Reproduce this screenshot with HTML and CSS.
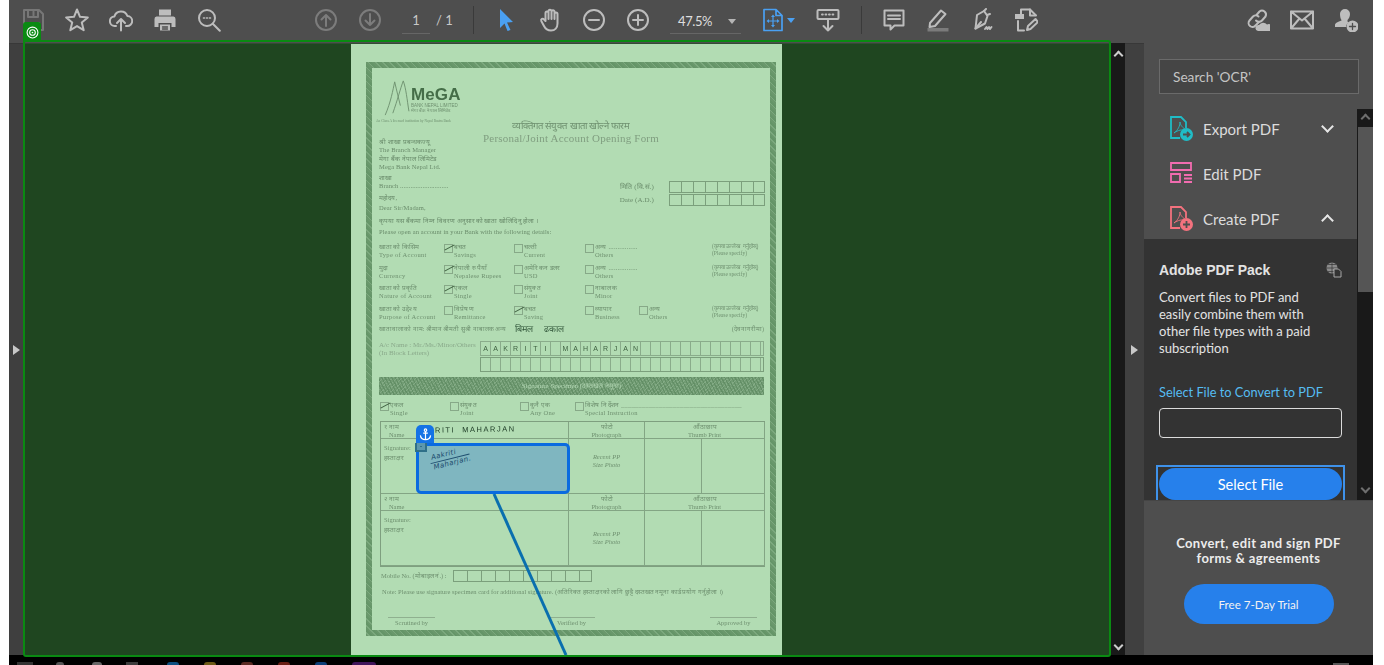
FILE: index.html
```html
<!DOCTYPE html>
<html lang="en">
<head>
<meta charset="utf-8">
<title>Acrobat Reader</title>
<link rel="stylesheet" href="styles.css">
</head>
<body>
<div class="app">
  <header class="toolbar">
    <div class="tb-group g-file">
      <button class="tb dim"><svg viewBox="0 0 24 24"><path d="M3 2h15l4 4v16H3z M7 2v7h10V2 M12.500 3.500v4"/><path d="M7 22v-7h11v7"/></svg></button>
      <button class="tb"><svg viewBox="0 0 24 24"><path d="M12 1.500l3 7.300 7.800.6-6 5.100 1.900 7.700-6.700-4.100-6.700 4.100 1.900-7.700-6-5.100 7.800-.6z"/></svg></button>
      <button class="tb"><svg viewBox="0 0 24 24"><path d="M7 18H6a4.800 4.800 0 0 1-.6-9.600 6.800 6.800 0 0 1 13-.4A5 5 0 0 1 18 18h-1"/><path d="M12 22.500V11.500M8 15l4-4 4 4"/></svg></button>
      <button class="tb"><svg viewBox="0 0 24 24"><path class="fill" d="M6 1.500h12v6H6zM3.500 8.500h17a2.500 2.500 0 0 1 2 2.500v8h-4v-4H5.500v4h-4v-8a2.500 2.500 0 0 1 2-2.500z"/><path class="fill" d="M7 16.500h10v6H7z"/><path class="cut" d="M9.500 19h5M9.500 21h5"/></svg></button>
      <button class="tb"><svg viewBox="0 0 24 24"><circle cx="10" cy="10" r="8"/><path d="M15.800 15.800l7 7"/><path class="dots" d="M6.500 10h1M9.500 10h1M12.500 10h1"/></svg></button>
    </div>
    <div class="tb-group g-page">
      <button class="tb off"><svg viewBox="0 0 24 24"><circle cx="12" cy="12" r="10"/><path d="M12 18V7M7.500 11.500L12 7l4.500 4.500"/></svg></button>
      <button class="tb off"><svg viewBox="0 0 24 24"><circle cx="12" cy="12" r="10"/><path d="M12 6v11M7.500 12.500L12 17l4.500-4.500"/></svg></button>
      <div class="pager"><span class="page-now">1</span><span class="page-all">/ 1</span></div>
    </div>
    <i class="tb-sep s1"></i>
    <div class="tb-group g-view">
      <button class="tb"><svg viewBox="0 0 24 24"><path class="blue-fill" d="M6 1l13 13-6 .5 3.500 7.500-3 1-3-7.500L6 20z"/></svg></button>
      <button class="tb hand-ic"><svg viewBox="0 0 24 24"><path d="M6.500 13V5a1.500 1.500 0 0 1 3 0v6V3.200a1.500 1.500 0 0 1 3 0V11 3.800a1.500 1.500 0 0 1 3 0V11 6a1.500 1.500 0 0 1 3 0v9.500c0 4-2.500 7-6.500 7s-5.500-1.500-7-4.500l-2.700-5c-.8-2 1.500-3 2.700-1.500z"/></svg></button>
      <button class="tb"><svg viewBox="0 0 24 24"><circle cx="12" cy="12" r="10"/><path d="M7 12h10"/></svg></button>
      <button class="tb"><svg viewBox="0 0 24 24"><circle cx="12" cy="12" r="10"/><path d="M7 12h10M12 7v10"/></svg></button>
      <div class="zoombox"><span>47.5%</span><i class="caret"></i></div>
      <button class="tb fit"><svg viewBox="0 0 24 24"><path class="blue" d="M3 1.500h12l6 6V22.500H3zM15 1.500v6h6"/><path class="blue thin" d="M12 9v8M8 13h8"/><path class="blue-fill" d="M12 6.500l2 2.500h-4zM12 19.500l2-2.500h-4zM5.500 13l2.500-2v4zM18.500 13l-2.500-2v4z"/></svg><i class="caret blue-caret"></i></button>
      <button class="tb keys"><svg viewBox="0 0 24 24"><rect x="1.500" y="2" width="21" height="9" rx="1"/><path d="M6 6.500h.8M9.500 6.500h.8M13 6.500h.8M16.500 6.500h.8M12 11v11.500M7.500 18l4.500 4.500 4.500-4.500"/></svg></button>
    </div>
    <i class="tb-sep s2"></i>
    <div class="tb-group g-tools">
      <button class="tb"><svg viewBox="0 0 24 24"><path d="M2.500 2.500h19v15h-9l-4 4v-4h-6z"/><path d="M6 7.500h12M6 11h12"/></svg></button>
      <button class="tb"><svg viewBox="0 0 24 24"><path d="M4 15L15 2.500l4.500 3.500L9 18l-5.500 1z"/><path class="fill soft" d="M1.500 20h21v3.500h-21z"/></svg></button>
      <button class="tb"><svg viewBox="0 0 24 24"><path d="M7 7l7-4 3.500 5-2.500 7.500-9.500 5z"/><path d="M5.500 20.500l5.500-6.500M14 3l2-2M17 7l3-1"/><path d="M15 21l1.500-2 1 2 1.500-2 1 2 1.500-2"/></svg></button>
      <button class="tb"><svg viewBox="0 0 24 24"><path d="M7 6.500V1.500h9l5.500 5.500"/><path d="M16 1.500v6h6"/><path class="fill" d="M1 6h9v5H1z"/><path d="M4 13v9.500h6"/><path d="M13 22l1-4 7.500-7 2.500 3-7.500 7z"/></svg></button>
    </div>
    <div class="tb-group g-share">
      <button class="tb"><svg viewBox="0 0 24 24"><path d="M10.500 7l3-3.500a4 4 0 0 1 6 5l-3.500 4a4 4 0 0 1-6 0"/><path d="M13 14l-3.500 3.500a3.800 3.800 0 0 1-6-5l3.500-4a4 4 0 0 1 5.500 0"/><path class="fill" d="M12 23a3 3 0 0 1 1-6 5 5 0 0 1 8-.5 3.300 3.300 0 0 1 3 6.500z"/></svg></button>
      <button class="tb"><svg viewBox="0 0 24 24"><path d="M1 3.500h22v17H1zM1 3.500l11 9 11-9M1 20.500l8.500-10M23 20.500l-8.500-10"/></svg></button>
      <button class="tb"><svg viewBox="0 0 24 24"><path class="fill" d="M11 1a5 5 0 0 1 5 5c0 3-1.500 5-2.500 6v1.500l1 1a7 7 0 0 0-2.500 4.500H1v-2c0-2 3-3 6.500-4.500V12C6.500 11 6 8.500 6 6a5 5 0 0 1 5-5z"/><circle class="fill" cx="18.500" cy="18.500" r="6"/><path class="cut" d="M15.500 18.500h6M18.500 15.500v6"/></svg></button>
    </div>
  </header>

  <main class="workspace">
    <div class="rail"><i class="tri"></i></div>
    <section class="doc">
      <article class="page">
        <div class="form">
          <div class="form-head">
            <div class="logo">
              <svg class="peaks" viewBox="0 0 30 40"><path d="M1 38C7 24 9 12 11 3 13 12 15 20 17 28 M9 36C14 22 17 10 20 2c3 8 4 20 6 32"/></svg>
              <div class="logo-text"><b>MeGA</b><span>BANK NEPAL LIMITED</span><span>मेगा बैंक नेपाल लिमिटेड</span></div>
              <small>An Class A licensed institution by Nepal Rastra Bank</small>
            </div>
            <div class="title"><span>व्यक्तिगत संयुक्त खाता खोल्ने फारम</span><strong>Personal/Joint Account Opening Form</strong></div>
          </div>
          <div class="addr">
            <p>श्री शाखा प्रबन्धकज्यू<br>The Branch Manager</p>
            <p>मेगा बैंक नेपाल लिमिटेड<br>Mega Bank Nepal Ltd.</p>
            <div class="addr-row">
              <p>शाखा<br>Branch ............................</p>
              <div class="dates">
                <div class="date-row"><span>मिति (वि.सं.)</span><i class="cells c8"></i></div>
                <div class="date-row"><span>Date (A.D.)</span><i class="cells c8"></i></div>
              </div>
            </div>
            <p class="dear">महोदय,<br>Dear Sir/Madam,</p>
            <p class="please">कृपया यस बैंकमा निम्न विवरण अनुसारको खाता खोलिदिनु होला ।<br>Please open an account in your Bank with the following details:</p>
          </div>

          <div class="opts">
            <div class="opt-row">
              <span class="lab">खाताको किसिम<br>Type of Account</span>
              <span class="opt on">बचत<br>Savings</span><span class="opt">चल्ती<br>Current</span><span class="opt">अन्य ................<br>Others</span>
              <span class="spec">(कृपया उल्लेख गर्नुहोस्)<br>(Please specify)</span>
            </div>
            <div class="opt-row">
              <span class="lab">मुद्रा<br>Currency</span>
              <span class="opt on">नेपाली रुपैयाँ<br>Nepalese Rupees</span><span class="opt">अमेरिकन डलर<br>USD</span><span class="opt">अन्य ................<br>Others</span>
              <span class="spec">(कृपया उल्लेख गर्नुहोस्)<br>(Please specify)</span>
            </div>
            <div class="opt-row">
              <span class="lab">खाताको प्रकृति<br>Nature of Account</span>
              <span class="opt on">एकल<br>Single</span><span class="opt">संयुक्त<br>Joint</span><span class="opt">नाबालक<br>Minor</span>
              <span class="spec"></span>
            </div>
            <div class="opt-row">
              <span class="lab">खाताको उद्देश्य<br>Purpose of Account</span>
              <span class="opt">विप्रेषण<br>Remittance</span><span class="opt on">बचत<br>Saving</span><span class="opt opt-split"><span class="opt">व्यापार<br>Business</span><span class="opt">अन्य<br>Others</span></span>
              <span class="spec">(कृपया उल्लेख गर्नुहोस्)<br>(Please specify)</span>
            </div>
          </div>

          <div class="acname-dev"><span>खातावालाको नाम: श्रीमान श्रीमती सुश्री नाबालक अन्य</span><em>बिमल</em><em>ढकाल</em><span class="end">(देवनागरीमा)</span></div>
          <div class="acname">
            <span class="ac-lab">A/c Name : Mr./Ms./Minor/Others<br>(In Block Letters)</span>
            <div class="ac-cells">
              <div class="letters"><i>A</i><i>A</i><i>K</i><i>R</i><i>I</i><i>T</i><i>I</i><i></i><i>M</i><i>A</i><i>H</i><i>A</i><i>R</i><i>J</i><i>A</i><i>N</i><i></i><i></i><i></i><i></i><i></i><i></i><i></i><i></i><i></i><i></i><i></i><i></i></div>
              <div class="cells c28"></div>
            </div>
          </div>

          <div class="sig-bar">Signature Specimen (दस्तखत नमूना)</div>

          <div class="sig-opts">
            <span class="opt on">एकल<br>Single</span><span class="opt">संयुक्त<br>Joint</span><span class="opt">कुनै एक<br>Any One</span><span class="opt wide">विशेष निर्देशन ___________________________________<br>Special Instruction</span>
          </div>

          <div class="sig-table">
            <div class="cell name">१ नाम<br>&nbsp;&nbsp;&nbsp;Name<b class="hand">RITI &nbsp;MAHARJAN</b></div>
            <div class="cell ctr">फोटो<br>Photograph</div>
            <div class="cell ctr thumbhead">औंठाछाप<br>Thumb Print</div>
            <div class="cell sign">Signature:<br>हस्ताक्षर</div>
            <div class="cell ctr photo raised"><em>Recent PP<br>Size Photo</em></div>
            <div class="cell"></div><div class="cell"></div>
            <div class="cell name">२ नाम<br>&nbsp;&nbsp;&nbsp;Name</div>
            <div class="cell ctr">फोटो<br>Photograph</div>
            <div class="cell ctr thumbhead">औंठाछाप<br>Thumb Print</div>
            <div class="cell sign">Signature:<br>हस्ताक्षर</div>
            <div class="cell ctr photo"><em>Recent PP<br>Size Photo</em></div>
            <div class="cell"></div><div class="cell"></div>
          </div>

          <div class="mobile"><span>Mobile No. (मोबाइल नं.) :</span><i class="cells c10"></i></div>
          <p class="note">Note: Please use signature specimen card for additional signature. (अतिरिक्त हस्ताक्षरको लागि छुट्टै दस्तखत नमूना कार्ड प्रयोग गर्नुहोला ।)</p>
          <div class="signoff"><span>Scrutined by</span><span>Verified by</span><span>Approved by</span></div>
        </div>
      </article>
    </section>
    <div class="vscroll"><i class="chev up"></i><i class="chev down"></i></div>
    <div class="gutter"><i class="tri"></i></div>
    <aside class="panel">
      <div class="panel-search"><div class="searchbox">Search 'OCR'</div></div>
      <div class="panel-scroll">
        <div class="panel-body">
          <div class="tool"><svg viewBox="0 0 26 26"><path class="teal" d="M17 12V6L12 1H2v21h9"/><path class="teal thin" d="M5 17c4-3 6-7 6-11 0 3 3 6 6 8-4-.5-8 0-12 3z"/><circle class="teal-f" cx="17.500" cy="18.500" r="6.500"/><path class="cutp" d="M14 18.500h6M18 16l2.500 2.500L18 21"/></svg><span>Export PDF</span><i class="fold down"></i></div>
          <div class="tool"><svg viewBox="0 0 26 26"><path class="pink" d="M2 2h20v7H2zM2 13h9v8H2zM15 14h8M15 17.500h8M15 21h8"/></svg><span>Edit PDF</span></div>
          <div class="tool"><svg viewBox="0 0 26 26"><path class="coral" d="M17 12V6L12 1H2v21h9"/><path class="coral thin" d="M5 17c4-3 6-7 6-11 0 3 3 6 6 8-4-.5-8 0-12 3z"/><circle class="coral-f" cx="17.500" cy="18.500" r="6.500"/><path class="cutp" d="M14 18.500h7M17.500 15v7"/></svg><span>Create PDF</span><i class="fold up"></i></div>
          <div class="pack">
            <div class="pack-head"><b>Adobe PDF Pack</b><svg viewBox="0 0 16 16"><circle class="globe" cx="6" cy="6" r="5.500"/><path class="globe-l" d="M.5 6h11M6 .5v11M2 2.500h8M2 9.500h8"/><path class="sheet" d="M8 7h4.500L15 9.500V15H8z"/></svg></div>
            <p>Convert files to PDF and easily combine them with other file types with a paid subscription</p>
            <label>Select File to Convert to PDF</label>
            <div class="fileinput"></div>
            <div class="focus"><button class="selectfile">Select File</button></div>
          </div>
        </div>
        <div class="pscroll"><i class="chev up dimc"></i><i class="thumb"></i><i class="chev down dimc"></i></div>
      </div>
      <div class="promo">
        <h3>Convert, edit and sign PDF forms &amp; agreements</h3>
        <button class="trial">Free 7-Day Trial</button>
      </div>
    </aside>

    <div class="highlight">
      <div class="hl-tab"><svg viewBox="0 0 12 12"><circle cx="6" cy="6" r="5"/><circle cx="6" cy="6" r="2.600"/><circle class="dot" cx="6" cy="6" r=".8"/></svg></div>
      <div class="annot">
        <span class="anchor"><svg viewBox="0 0 14 14"><circle cx="7" cy="2.300" r="1.300"/><path d="M7 3.600V12.500M4.500 5.500h5M1.500 8c.3 2.800 2.800 4.500 5.500 4.500s5.200-1.700 5.500-4.500"/></svg></span>
        <span class="tile"></span>
        <span class="scrawl"><span>Aakriti</span><span>Maharjan.</span></span>
      </div>
      <svg class="leader" viewBox="0 0 80 170"><path d="M3 1L75 162"/></svg>
    </div>
  </main>
  <footer class="taskbar"><i class="tk g1"></i><i class="tk g2"></i><i class="tk g3"></i><i class="tk g4"></i><i class="tk t1"></i><i class="tk t2"></i><i class="tk t3"></i><i class="tk t4"></i><i class="tk t5"></i><i class="tk t6"></i><i class="tk r1"></i></footer>
</div>
</body>
</html>
```
FILE: styles.css
```css
*{box-sizing:border-box}
html,body{margin:0;height:100%;background:#fff;overflow:hidden}
body{font-family:"Lato","Liberation Sans",sans-serif}
button{font:inherit;border:0;background:none;padding:0;color:inherit}
.app{margin-left:9px;width:1364px;height:665px;display:flex;flex-direction:column;background:#000;overflow:hidden}

/* toolbar */
.toolbar{height:43px;flex:none;background:#4e4e4e;display:flex;align-items:flex-start;padding-left:2px}
.tb-group{display:flex;align-items:center;height:40px}
.tb{width:44px;height:40px;display:flex;align-items:center;justify-content:center;flex:none}
.tb svg{width:24px;height:24px;fill:none;stroke:#bdbdbd;stroke-width:2;stroke-linejoin:round;stroke-linecap:round}
.tb .fill{fill:#bdbdbd;stroke:none}
.tb .fill.soft{fill:#7b7b7b}
.tb .cut{stroke:#4e4e4e;stroke-width:1.300;fill:none}
.tb .dots{stroke-width:1.600}
.tb.dim svg{stroke:#777}
.tb.off svg{stroke:#7c7c7c}
.tb .blue{stroke:#4aa0f2;stroke-width:1.700;fill:none}
.tb .blue.thin{stroke-width:1.200}
.tb .blue-fill{fill:#4aa0f2;stroke:none}
.hand-ic svg{margin-left:2px}
.g-page{margin-left:73px}
.pager{width:81px;height:40px;display:flex;align-items:center;position:relative;color:#c8c8c8;font-size:13px}
.page-now{width:28px;margin-left:10px;text-align:center;height:24px;line-height:20px;border-bottom:1px solid #666;margin-top:3px}
.page-all{margin-left:6px}
.tb-sep{width:1px;height:28px;background:#3a3a3a;margin-top:6px;flex:none}
.g-view{margin-left:10px}
.zoombox{width:71px;margin-left:10px;height:24px;margin-top:3px;border-bottom:1px solid #666;display:flex;align-items:center;color:#dedede;font-size:13px;letter-spacing:-.4px;padding-left:8px}
.caret{width:0;height:0;border-left:4px solid transparent;border-right:4px solid transparent;border-top:5px solid #b5b5b5;margin-left:16px}
.tb.fit{margin-left:15px}
.tb.fit svg{margin-left:-1px}
.blue-caret{border-top-color:#4aa0f2;margin-left:2px}
.tb.keys{margin-left:6px}
.s2{margin-left:11px}
.g-tools{margin-left:10px}
.g-share{margin-left:188px}

/* workspace */
.workspace{flex:1;display:flex;height:612px;position:relative;min-height:0}
.rail{width:15px;flex:none;background:#3f3f3f;display:flex;align-items:center;justify-content:center;border-top:1px solid #383838}
.tri{display:block;width:0;height:0;border-top:5px solid transparent;border-bottom:5px solid transparent;border-left:7px solid #c8c8c8}
.doc{width:1087px;flex:none;background:#1f4620;display:flex;justify-content:center;padding-right:2px;border-top:1px solid #324c33;overflow:hidden}
.vscroll{width:14px;flex:none;background:#191919;display:flex;flex-direction:column;justify-content:space-between;align-items:center;padding:6px 0}
.gutter{width:19px;flex:none;background:#404040;display:flex;align-items:center;justify-content:center;border-top:1px solid #383838}
.chev{display:block;width:7px;height:7px;border-left:2px solid #ccc;border-top:2px solid #ccc}
.chev.up{transform:rotate(45deg);margin-top:3px}
.chev.down{transform:rotate(225deg);margin-bottom:0}
.chev.dimc{border-color:#6e6e6e}

/* scanned page */
.page{width:431px;height:611px;flex:none;background:#b2dcb3;padding:18px 6px 0 15px;font-family:"Liberation Serif","Noto Sans CJK SC",serif;color:#6f9170;filter:blur(.35px);font-size:6.500px;line-height:8px}
.form{height:574px;border:6px solid #6f9d71;border-image:repeating-linear-gradient(45deg,#6a986c 0 2px,#7ba87d 2px 3px,#659568 3px 5px) 6;padding:11px 6px 0 7px;display:flex;flex-direction:column}
.form>*{flex:none}
.form p{margin:0}
.form-head{height:46px;display:flex;position:relative}
.logo{width:90px;position:relative;padding-left:26px;padding-top:7px;margin-left:6px}
.peaks{position:absolute;left:-3px;top:0;width:33px;height:38px;fill:none;stroke:#6f9170;stroke-width:1}
.logo-text{display:flex;flex-direction:column;font-size:4.500px;line-height:5px;font-family:"Liberation Sans",sans-serif}
.logo-text b{font-size:17px;line-height:17px;color:#456e48;letter-spacing:.1px}
.logo small{position:absolute;left:-9px;top:38px;font-size:3.500px;white-space:nowrap}
.title{display:flex;flex-direction:column;align-items:center;width:188px;margin-left:2px;padding-top:41px;white-space:nowrap}
.title span{font-size:9.500px;line-height:12px}
.title strong{font-weight:400;font-size:11px;line-height:12px;letter-spacing:.2px;color:#809e80}
.addr{display:flex;flex-direction:column;margin-top:13px;color:#6a8c6b;letter-spacing:.1px}
.addr p{margin-bottom:1px}
.addr>p:nth-child(2){margin-bottom:3px}
.addr-row{display:flex;justify-content:space-between;height:15px}
.dates{display:flex;flex-direction:column;gap:1px;margin-top:7px;margin-right:-1px}
.date-row{display:flex;align-items:center;justify-content:flex-end;gap:15px;font-size:7px}
.cells{display:block;height:12px;border:1px solid #7b9f7c;background:repeating-linear-gradient(90deg,transparent 0 11px,#7b9f7c 11px 12px)}
.c8{width:96px}
.c10{width:139px;height:12px;background:repeating-linear-gradient(90deg,transparent 0 13px,#7b9f7c 13px 14px)}
.c28{width:284px;height:15px;background:repeating-linear-gradient(90deg,transparent 0 9px,#8aac8b 9px 10px)}
.addr .dear{margin-top:4px;margin-bottom:2px;line-height:10px}
.please{margin-top:2px;line-height:11px}
.opts{display:flex;flex-direction:column;gap:4.500px;margin-top:5px}
.opt-row{display:grid;grid-template-columns:65px 70px 71px 142px 1fr;height:16px;white-space:nowrap;line-height:8px}
.lab{letter-spacing:.3px}
.opt{position:relative;padding-left:10px;letter-spacing:.2px;display:block}
.opt::before{content:"";position:absolute;left:0;top:1px;width:7px;height:7px;border:1px solid #87a988}
.opt.on::after{content:"";position:absolute;left:0;top:4px;width:11px;height:1px;background:#3d5f3f;transform:rotate(-28deg)}
.opt-split{padding:0;display:grid;grid-template-columns:54px 1fr}
.opt-split::before{display:none}
.spec{font-size:5.500px;line-height:7px;margin-left:-15px}
.acname-dev{display:flex;gap:9px;margin-top:2px;height:13px;align-items:center;white-space:nowrap;font-size:6.300px}
.acname-dev em{font-style:normal;color:#31563a;font-size:9px;margin-left:0;margin-right:2px}
.acname-dev .end{margin-left:auto}
.acname{display:flex;gap:3px;margin-top:5px;height:31px;font-size:7px}
.ac-lab{width:102px;white-space:nowrap;color:#8aa98b}
.ac-cells{display:flex;flex-direction:column;gap:1px}
.letters{display:grid;grid-template-columns:repeat(28,10px);height:15px;width:284px;border:1px solid #8aac8b}
.letters i{font-style:normal;font-family:"Liberation Sans",sans-serif;font-size:7px;text-align:center;line-height:14px;color:#3d5f3f;border-right:1px solid #8aac8b}
.sig-bar{margin-top:5px;height:18px;line-height:18px;text-align:center;font-size:7px;color:#b4d8b5;background:#729c74;background-image:repeating-linear-gradient(62deg,transparent 0 1px,#638f66 1px 2px,transparent 2px 3px),repeating-linear-gradient(-40deg,transparent 0 2px,#83ab85 2px 3px)}
.sig-opts{display:grid;grid-template-columns:70px 70px 55px 1fr;margin-top:6px;height:18px;padding-left:1px;white-space:nowrap}
.sig-table{display:grid;grid-template-columns:188px 76px 57px 63px;grid-template-rows:17px 55px 17px 55px;width:385px;margin:2px 0 0 1px;border:1px solid #7e9f7f;position:relative}
.cell{border-right:1px solid #83a584;border-bottom:1px solid #83a584;padding:1px 0 0 3px;white-space:nowrap;line-height:8px;position:relative}
.sign{padding-top:4px;line-height:10px}
.ctr{text-align:center;padding:1px 0 0}
.thumbhead{grid-column:span 2}
.photo{display:flex;align-items:center;justify-content:center;line-height:8px}
.raised{padding-bottom:10px}
.photo em{color:#6f9170}
.hand{position:absolute;left:54px;top:4px;font-family:"Liberation Sans",sans-serif;font-weight:400;font-size:7.500px;letter-spacing:1.500px;color:#1c3a24;transform:rotate(-1deg)}
.mobile{display:flex;gap:6px;margin-top:3px;padding-left:2px;align-items:center;height:13px;white-space:nowrap}
.form .note{margin-top:5px;padding-left:3px;white-space:nowrap;letter-spacing:0}
.signoff{display:grid;grid-template-columns:1fr 1fr 1fr;margin-top:21px;text-align:center}
.signoff span{width:47px;border-top:1px solid #8fb08f;line-height:9px}
.signoff span:first-child{margin-left:9px}
.signoff span:nth-child(2){justify-self:center}
.signoff span:nth-child(3){justify-self:end;margin-right:7px}

/* right panel */
.panel{width:229px;flex:none;background:#4e4e4e;display:flex;flex-direction:column;font-family:"Lato","Liberation Sans",sans-serif}
.panel-search{height:66px;padding:16px 14px 0 15px;flex:none}
.searchbox{height:35px;border:1px solid #6a6a6a;background:#454545;color:#c4c4c4;font-size:13.700px;line-height:33px;padding-left:13px}
.panel-scroll{height:391px;flex:none;display:flex}
.panel-body{width:213px;overflow:hidden;flex:none;height:391px}
.tool{height:45px;display:flex;align-items:center;padding-left:25px;color:#dcdcdc;font-size:15px;position:relative}
.tool:first-child{margin-top:-3px}
.tool svg{width:26px;height:26px;flex:none;margin-right:8px;fill:none;stroke-width:1.800}
.teal{stroke:#20bcc6}.teal-f{fill:#20bcc6}
.pink{stroke:#f26cb0}
.coral{stroke:#f3727e}.coral-f{fill:#f3727e}
.tool .thin{stroke-width:1;opacity:.85}
.cutp{stroke:#4e4e4e;stroke-width:1.800}
.fold{position:absolute;left:179px;width:9px;height:9px;border-left:2px solid #e6e6e6;border-top:2px solid #e6e6e6}
.fold.down{transform:rotate(225deg);top:16px}
.fold.up{transform:rotate(45deg);top:20px}
.pack{height:262px;margin-top:-2px;background:#333;padding:22px 15px 0;color:#e3e3e3;font-size:13px;line-height:17px}
.pack-head{display:flex;justify-content:space-between;align-items:center;height:18px}
.pack-head b{font-family:"Liberation Sans",sans-serif;font-size:14px;letter-spacing:-.05px}
.pack-head svg{width:16px;height:16px;fill:none}
.globe{fill:#8c8c8c}.globe-l{stroke:#333;stroke-width:.7}.sheet{fill:#333;stroke:#a8a8a8;stroke-width:1}
.pack p{margin:10px 0 0;width:162px}
.pack label{display:block;margin-top:27px;color:#56bdf2;font-size:12.800px;white-space:nowrap}
.fileinput{height:30px;width:183px;border:1px solid #dcdcdc;border-radius:4px;margin-top:7px}
.focus{width:189px;height:38px;margin:27px 0 0 -3px;border:2px solid #3f92ea;border-bottom:0;padding:1px;background:#333}
.selectfile{display:block;width:183px;height:32px;border-radius:16px;background:#2680eb;color:#fff;font-size:14.600px}
.pscroll{width:16px;flex:none;background:#191919;display:flex;flex-direction:column;align-items:center;position:relative}
.pscroll .thumb{display:block;width:15px;height:165px;background:#555;margin-top:5px;margin-left:1px}
.pscroll .chev.up{margin-top:6px}
.pscroll .chev.down{margin-top:auto;margin-bottom:8px}
.promo{flex:1;background:#4e4e4e;border-top:1px solid #454545;display:flex;flex-direction:column;align-items:center;padding:35px 0 0 0;width:229px}
.promo h3{margin:0;width:180px;font-size:13px;line-height:15px;text-align:center;color:#ececec;font-weight:700;letter-spacing:.4px}
.trial{margin-top:18px;width:150px;height:40px;border-radius:20px;background:#2680eb;color:#f2f2f2;font-size:11.600px}

/* overlays over the document */
.highlight{position:absolute;z-index:1;left:14px;top:-3px;width:1088px;height:617px;border:2px solid #0a8a12;border-radius:3px;pointer-events:none}
.hl-tab{position:absolute;left:-2px;top:-20px;width:18px;height:20px;background:#0a8a12;border-radius:3px 3px 0 0;display:flex;align-items:center;justify-content:center}
.hl-tab svg{width:13px;height:13px;fill:none;stroke:#fff;stroke-width:1}
.hl-tab .dot{fill:#fff;stroke:none}
.annot{position:absolute;left:391px;top:401px;width:154px;height:51px;background:#7fb6c0;border:3px solid #0a6be0;border-radius:5px}
.anchor{position:absolute;left:-3px;top:-21px;width:18px;height:18px;background:#1473e6;border-radius:5px 5px 0 0;display:flex;align-items:center;justify-content:center}
.anchor svg{width:13px;height:13px;fill:none;stroke:#fff;stroke-width:1.300}
.tile{position:absolute;left:-4px;top:-3px;width:12px;height:9px;background:#2f6f88;border:2px solid #2f6f88;border-top:0;box-shadow:inset 0 0 0 3px #5c97ad}
.scrawl{position:absolute;left:13px;top:3px;display:flex;flex-direction:column;font-family:"DejaVu Sans",sans-serif;font-style:italic;font-size:7px;line-height:9px;letter-spacing:.4px;color:#1e4d6e;transform:rotate(-14deg)}
.scrawl span:last-child{border-top:1px solid #1e4d6e;margin-left:-2px;padding-left:2px}
.leader{position:absolute;left:466px;top:451px;width:80px;height:170px;overflow:visible;fill:none;stroke:#0a6fae;stroke-width:3}

.taskbar{height:10px;flex:none;background:#000;position:relative;display:flex;align-items:flex-end;padding-left:8px;overflow:hidden}
.tk{display:block;width:12px;height:3px;border-radius:6px 6px 0 0;margin-right:25px;flex:none}
.g1{width:16px;background:#333;border-radius:0;margin-right:23px}
.g2{width:8px;background:#555;margin-right:28px}
.g3{width:10px;background:#666;margin-right:24px}
.g4{background:#3c3c3c;border-radius:0;margin-right:29px}
.t1{background:#0c4f80}.t2{background:#6c5a16}.t3{background:#5a2a22}.t4{background:#6a1e14}.t5{background:#0c3f78}.t6{width:24px;background:#40145a}
.r1{width:16px;height:2px;border-radius:0;background:#555;margin-left:auto;margin-right:24px}
```
